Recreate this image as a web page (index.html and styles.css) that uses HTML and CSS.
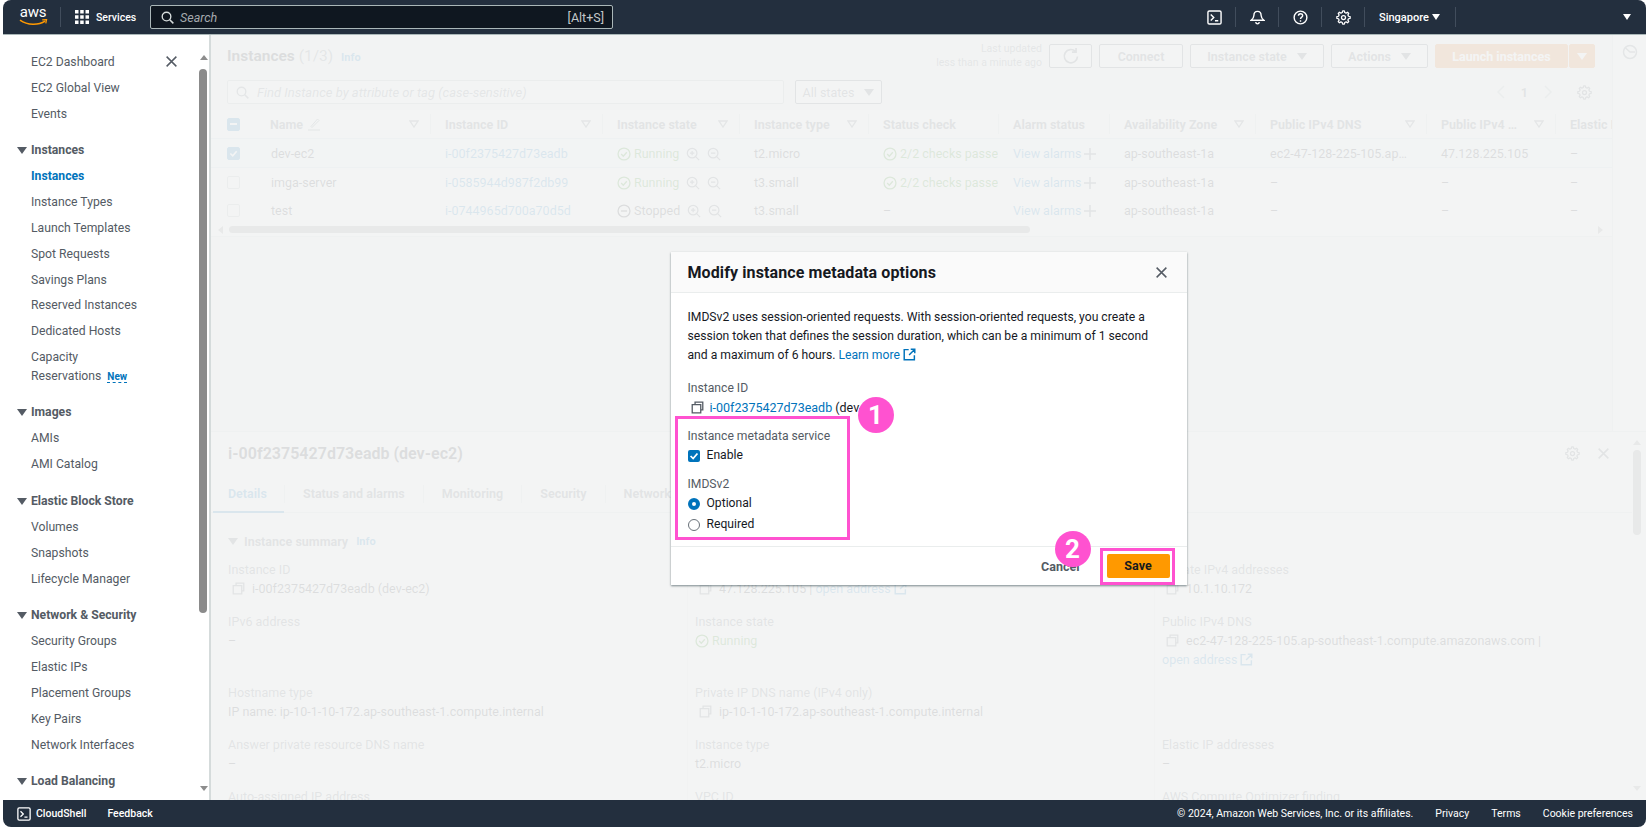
FILE: index.html
```html
<!DOCTYPE html>
<html lang="en">
<head>
    <meta charset="UTF-8">
    <title>Instances | EC2</title>
    <link rel="stylesheet" href="styles.css">
</head>
<body>
<svg class="defs">
    <symbol id="i-copy" viewBox="0 0 16 16"><path d="M5 4V1.500h9.500V11H12M1.500 4.500H12v10H1.500z" fill="none" stroke="currentColor" stroke-width="1.600"/></symbol>
    <symbol id="i-gear" viewBox="-1 0 18 18"><path d="M7 1h2l.5 2 1.600.7 1.800-1 1.400 1.400-1 1.800.7 1.600 2 .5v2l-2 .5-.7 1.600 1 1.800-1.400 1.400-1.800-1-1.600.7-.5 2H7l-.5-2-1.600-.7-1.800 1-1.400-1.400 1-1.800-.7-1.600-2-.5V8l2-.5.7-1.600-1-1.800 1.400-1.400 1.800 1 1.600-.7z" fill="none" stroke="currentColor" stroke-width="1.500" stroke-linejoin="round"/><circle cx="8" cy="9" r="2.400" fill="none" stroke="currentColor" stroke-width="1.500"/></symbol>
    <symbol id="i-search" viewBox="0 0 16 16"><circle cx="6.800" cy="6.800" r="5.300" fill="none" stroke="currentColor" stroke-width="1.700"/><path d="M10.800 10.800l4.400 4.400" stroke="currentColor" stroke-width="1.900"/></symbol>
    <symbol id="i-close" viewBox="0 0 16 16"><path d="M2 2l12 12M14 2L2 14" stroke="currentColor" stroke-width="1.800"/></symbol>
    <symbol id="i-external" viewBox="0 0 16 16"><path d="M7 2H1.500v12.500H14V9M9.500 1.500h5v5M14.500 1.500L7.500 8.500" fill="none" stroke="currentColor" stroke-width="1.800"/></symbol>
    <symbol id="i-check" viewBox="0 0 16 16"><circle cx="8" cy="8" r="6.800" fill="none" stroke="currentColor" stroke-width="1.500"/><path d="M4.800 8l2.400 2.500 4-4.500" fill="none" stroke="currentColor" stroke-width="1.500"/></symbol>
    <symbol id="i-stop" viewBox="0 0 16 16"><circle cx="8" cy="8" r="6.800" fill="none" stroke="currentColor" stroke-width="1.500"/><path d="M4.500 8h7" stroke="currentColor" stroke-width="1.500"/></symbol>
    <symbol id="i-zoomin" viewBox="0 0 16 16"><circle cx="7" cy="7" r="5.500" fill="none" stroke="currentColor" stroke-width="1.400"/><path d="M11 11l4 4M4.500 7h5M7 4.500v5" stroke="currentColor" stroke-width="1.400"/></symbol>
    <symbol id="i-zoomout" viewBox="0 0 16 16"><circle cx="7" cy="7" r="5.500" fill="none" stroke="currentColor" stroke-width="1.400"/><path d="M11 11l4 4M4.500 7h5" stroke="currentColor" stroke-width="1.400"/></symbol>
    <symbol id="i-plus" viewBox="0 0 14 14"><path d="M7 1v12M1 7h12" stroke="currentColor" stroke-width="1.500"/></symbol>
    <symbol id="i-shell" viewBox="0 0 16 16"><rect x="1" y="1" width="14" height="14" rx="1.500" fill="none" stroke="currentColor" stroke-width="1.500"/><path d="M4 4.800L7.200 8 4 11.200M8.500 11.500h3.500" fill="none" stroke="currentColor" stroke-width="1.500"/></symbol>
    <symbol id="i-sort" viewBox="0 0 10 8"><path d="M1 1h8L5 7z" fill="none" stroke="currentColor" stroke-width="1.300"/></symbol>
</svg>

<div class="app">
    <header class="topbar">
        <div class="logo">
            <span class="logo-text">aws</span>
            <svg class="logo-smile" viewBox="0 0 30 7"><path d="M1 1c8 5.500 19 5.500 26 1" fill="none" stroke="#f90" stroke-width="1.600"/><path d="M24 .8l4.500-.3-.8 4" fill="none" stroke="#f90" stroke-width="1.300"/></svg>
        </div>
        <span class="top-sep top-sep-logo"></span>
        <svg class="grid-icon" viewBox="0 0 14 14"><path fill="#fff" d="M0 0h3.500v3.500H0zM5.200 0h3.500v3.500H5.200zM10.500 0H14v3.500h-3.500zM0 5.200h3.500v3.500H0zM5.200 5.200h3.500v3.500H5.200zM10.500 5.200H14v3.500h-3.500zM0 10.500h3.500V14H0zM5.200 10.500h3.500V14H5.200zM10.500 10.500H14V14h-3.500z"/></svg>
        <span class="services">Services</span>
        <div class="top-search">
            <svg class="ic-13"><use href="#i-search"/></svg>
            <span class="top-search-text">Search</span>
            <span class="top-search-key">[Alt+S]</span>
        </div>
        <div class="top-right">
            <svg class="top-icon"><use href="#i-shell"/></svg>
            <span class="top-sep"></span>
            <svg class="top-icon" viewBox="0 0 16 16"><path d="M8 1.500c-2.500 0-3.800 1.800-3.800 4.200 0 2.500-1.200 3.800-3 5.300h13.600c-1.800-1.500-3-2.800-3-5.300 0-2.400-1.300-4.200-3.800-4.200zM6 13c.3 1.200 1 1.800 2 1.800s1.700-.6 2-1.800" fill="none" stroke="#fff" stroke-width="1.500"/></svg>
            <span class="top-sep"></span>
            <svg class="top-icon" viewBox="0 0 16 16"><circle cx="8" cy="8" r="6.800" fill="none" stroke="#fff" stroke-width="1.500"/><path d="M5.800 6.200c0-3 4.500-3 4.500-.2 0 1.700-2.300 1.600-2.300 3.600M8 10.800v1.700" fill="none" stroke="#fff" stroke-width="1.500"/></svg>
            <span class="top-sep"></span>
            <svg class="top-icon"><use href="#i-gear"/></svg>
            <span class="top-sep"></span>
            <span class="region">Singapore</span>
            <span class="caret caret-white"></span>
            <span class="top-sep top-sep-region"></span>
            <span class="caret caret-white caret-account"></span>
        </div>
    </header>

    <div class="middle">
        <nav class="sidebar">
            <svg class="side-close"><use href="#i-close"/></svg>
            <a class="side-link">EC2 Dashboard</a>
            <a class="side-link">EC2 Global View</a>
            <a class="side-link">Events</a>

            <div class="side-head">Instances</div>
            <a class="side-link is-active">Instances</a>
            <a class="side-link">Instance Types</a>
            <a class="side-link">Launch Templates</a>
            <a class="side-link">Spot Requests</a>
            <a class="side-link">Savings Plans</a>
            <a class="side-link">Reserved Instances</a>
            <a class="side-link">Dedicated Hosts</a>
            <a class="side-link side-link-two">Capacity<br>Reservations <span class="side-new">New</span></a>

            <div class="side-head">Images</div>
            <a class="side-link">AMIs</a>
            <a class="side-link">AMI Catalog</a>

            <div class="side-head">Elastic Block Store</div>
            <a class="side-link">Volumes</a>
            <a class="side-link">Snapshots</a>
            <a class="side-link">Lifecycle Manager</a>

            <div class="side-head">Network &amp; Security</div>
            <a class="side-link">Security Groups</a>
            <a class="side-link">Elastic IPs</a>
            <a class="side-link">Placement Groups</a>
            <a class="side-link">Key Pairs</a>
            <a class="side-link">Network Interfaces</a>

            <div class="side-head">Load Balancing</div>

            <div class="side-scroll">
                <span class="arrow-up"></span>
                <span class="side-thumb"></span>
                <span class="arrow-down"></span>
            </div>
        </nav>

        <main class="main">
            <div class="main-top">
                <section class="instances">
                    <div class="title-row">
                        <h1 class="page-title">Instances <span class="page-count">(1/3)</span> <a class="info">Info</a></h1>
                        <div class="updated">Last updated<br>less than a minute ago</div>
                        <button class="btn btn-icon"><svg class="ic-18" viewBox="0 0 16 16"><path d="M13.800 8.500a5.900 5.900 0 1 1-1.700-4.500M12.500 .8v3.700H8.800" fill="none" stroke="currentColor" stroke-width="1.500"/></svg></button>
                        <button class="btn btn-connect">Connect</button>
                        <button class="btn btn-state">Instance state <span class="caret"></span></button>
                        <button class="btn btn-actions">Actions <span class="caret"></span></button>
                        <button class="btn btn-launch">Launch instances</button>
                        <button class="btn btn-launch-more"><span class="caret"></span></button>
                    </div>
                    <div class="filter-row">
                        <div class="filter-box">
                            <svg class="ic-13"><use href="#i-search"/></svg>
                            <span>Find Instance by attribute or tag (case-sensitive)</span>
                        </div>
                        <button class="btn btn-states">All states <span class="caret"></span></button>
                        <div class="pager">
                            <svg class="pager-arrow" viewBox="0 0 10 16"><path d="M8 2L2 8l6 6" fill="none" stroke="currentColor" stroke-width="1.500"/></svg>
                            <b>1</b>
                            <svg class="pager-arrow" viewBox="0 0 10 16"><path d="M2 2l6 6-6 6" fill="none" stroke="currentColor" stroke-width="1.500"/></svg>
                            <svg class="pager-gear"><use href="#i-gear"/></svg>
                        </div>
                    </div>

                    <table class="grid">
                        <colgroup>
                            <col class="c-cb"><col class="c-name"><col class="c-id"><col class="c-state"><col class="c-type"><col class="c-check"><col class="c-alarm"><col class="c-az"><col class="c-dns"><col class="c-ip"><col class="c-eip">
                        </colgroup>
                        <thead>
                            <tr>
                                <th class="cell-cb"><span class="box box-mixed"></span></th>
                                <th><div class="th-in">Name <svg class="ic-pen" viewBox="0 0 14 14"><path d="M1 13h12M4 9.500L10.500 2l1.500 1.500L5 10.500z" fill="none" stroke="currentColor"/></svg><svg class="sort"><use href="#i-sort"/></svg></div></th>
                                <th class="has-sep"><div class="th-in">Instance ID <svg class="sort"><use href="#i-sort"/></svg></div></th>
                                <th class="has-sep"><div class="th-in">Instance state <svg class="sort"><use href="#i-sort"/></svg></div></th>
                                <th class="has-sep"><div class="th-in">Instance type <svg class="sort"><use href="#i-sort"/></svg></div></th>
                                <th class="has-sep"><div class="th-in">Status check</div></th>
                                <th class="has-sep"><div class="th-in">Alarm status</div></th>
                                <th class="has-sep"><div class="th-in">Availability Zone <svg class="sort"><use href="#i-sort"/></svg></div></th>
                                <th class="has-sep"><div class="th-in">Public IPv4 DNS <svg class="sort"><use href="#i-sort"/></svg></div></th>
                                <th class="has-sep"><div class="th-in">Public IPv4 … <svg class="sort"><use href="#i-sort"/></svg></div></th>
                                <th class="has-sep"><div class="th-in">Elastic IP</div></th>
                            </tr>
                        </thead>
                        <tbody>
                            <tr class="is-selected">
                                <td class="cell-cb"><span class="box box-checked"><svg viewBox="0 0 14 14"><path d="M3 7l3 3 5-6" fill="none" stroke="#fff" stroke-width="2"/></svg></span></td>
                                <td>dev-ec2</td>
                                <td><a class="link">i-00f2375427d73eadb</a></td>
                                <td><span class="state ok"><svg class="ic-15"><use href="#i-check"/></svg>Running</span><svg class="ic-zoom"><use href="#i-zoomin"/></svg><svg class="ic-zoom"><use href="#i-zoomout"/></svg></td>
                                <td>t2.micro</td>
                                <td class="clip"><span class="state ok"><svg class="ic-15"><use href="#i-check"/></svg>2/2 checks passed</span></td>
                                <td><a class="link">View alarms</a> <svg class="ic-plus"><use href="#i-plus"/></svg></td>
                                <td>ap-southeast-1a</td>
                                <td>ec2-47-128-225-105.ap…</td>
                                <td>47.128.225.105</td>
                                <td>–</td>
                            </tr>
                            <tr>
                                <td class="cell-cb"><span class="box"></span></td>
                                <td>imga-server</td>
                                <td><a class="link">i-0585944d987f2db99</a></td>
                                <td><span class="state ok"><svg class="ic-15"><use href="#i-check"/></svg>Running</span><svg class="ic-zoom"><use href="#i-zoomin"/></svg><svg class="ic-zoom"><use href="#i-zoomout"/></svg></td>
                                <td>t3.small</td>
                                <td class="clip"><span class="state ok"><svg class="ic-15"><use href="#i-check"/></svg>2/2 checks passed</span></td>
                                <td><a class="link">View alarms</a> <svg class="ic-plus"><use href="#i-plus"/></svg></td>
                                <td>ap-southeast-1a</td>
                                <td>–</td>
                                <td>–</td>
                                <td>–</td>
                            </tr>
                            <tr>
                                <td class="cell-cb"><span class="box"></span></td>
                                <td>test</td>
                                <td><a class="link">i-0744965d700a70d5d</a></td>
                                <td><span class="state"><svg class="ic-15"><use href="#i-stop"/></svg>Stopped</span><svg class="ic-zoom"><use href="#i-zoomin"/></svg><svg class="ic-zoom"><use href="#i-zoomout"/></svg></td>
                                <td>t3.small</td>
                                <td>–</td>
                                <td><a class="link">View alarms</a> <svg class="ic-plus"><use href="#i-plus"/></svg></td>
                                <td>ap-southeast-1a</td>
                                <td>–</td>
                                <td>–</td>
                                <td>–</td>
                            </tr>
                        </tbody>
                    </table>
                    <div class="h-scroll"><span class="h-thumb"></span></div>
                </section>
                <aside class="tools">
                    <svg class="tools-icon" viewBox="0 0 16 16"><circle cx="8" cy="8" r="6.500" fill="none" stroke="currentColor" stroke-width="1.500"/><path d="M3 3.500L8 8h5" fill="none" stroke="currentColor" stroke-width="1.500"/></svg>
                </aside>
            </div>

            <section class="split">
                <div class="split-head">
                    <h2 class="split-title">i-00f2375427d73eadb (dev-ec2)</h2>
                    <svg class="split-gear"><use href="#i-gear"/></svg>
                    <svg class="split-close"><use href="#i-close"/></svg>
                </div>
                <div class="tabs">
                    <span class="tab is-active">Details</span>
                    <span class="tab">Status and alarms</span>
                    <span class="tab">Monitoring</span>
                    <span class="tab">Security</span>
                    <span class="tab">Networking</span>
                    <span class="tab">Storage</span>
                    <span class="tab">Tags</span>
                </div>
                <div class="summary-head"><span class="caret"></span><b>Instance summary</b> <a class="info">Info</a></div>
                <div class="details">
                    <div class="field"><label>Instance ID</label><p><svg class="ic-copy"><use href="#i-copy"/></svg>i-00f2375427d73eadb (dev-ec2)</p></div>
                    <div class="field"><label>Public IPv4 address</label><p><svg class="ic-copy"><use href="#i-copy"/></svg>47.128.225.105 | <a class="link">open address</a> <svg class="ic-ext link"><use href="#i-external"/></svg></p></div>
                    <div class="field"><label>Private IPv4 addresses</label><p><svg class="ic-copy"><use href="#i-copy"/></svg>10.1.10.172</p></div>

                    <div class="field"><label>IPv6 address</label><p>–</p></div>
                    <div class="field"><label>Instance state</label><p class="ok"><svg class="ic-state"><use href="#i-check"/></svg>Running</p></div>
                    <div class="field"><label>Public IPv4 DNS</label><p><svg class="ic-copy"><use href="#i-copy"/></svg>ec2-47-128-225-105.ap-southeast-1.compute.amazonaws.com |</p><p><a class="link">open address</a> <svg class="ic-ext link"><use href="#i-external"/></svg></p></div>

                    <div class="field"><label>Hostname type</label><p>IP name: ip-10-1-10-172.ap-southeast-1.compute.internal</p></div>
                    <div class="field"><label>Private IP DNS name (IPv4 only)</label><p><svg class="ic-copy"><use href="#i-copy"/></svg>ip-10-1-10-172.ap-southeast-1.compute.internal</p></div>
                    <div class="field"></div>

                    <div class="field"><label>Answer private resource DNS name</label><p>–</p></div>
                    <div class="field"><label>Instance type</label><p>t2.micro</p></div>
                    <div class="field"><label>Elastic IP addresses</label><p>–</p></div>

                    <div class="field"><label>Auto-assigned IP address</label></div>
                    <div class="field"><label>VPC ID</label></div>
                    <div class="field"><label>AWS Compute Optimizer finding</label></div>
                </div>
                <div class="split-scroll"><span class="arrow-up"></span><span class="split-thumb"></span><span class="arrow-down"></span></div>
            </section>

            <div class="overlay">
                <div class="modal">
                    <div class="modal-head">
                        <h2>Modify instance metadata options</h2>
                        <svg class="modal-close"><use href="#i-close"/></svg>
                    </div>
                    <div class="modal-body">
                        <p class="modal-intro">IMDSv2 uses session-oriented requests. With session-oriented requests, you create a session token that defines the session duration, which can be a minimum of 1 second and a maximum of 6 hours. <a class="link-on">Learn more</a> <svg class="ic-ext link-on"><use href="#i-external"/></svg></p>
                        <div class="form-label">Instance ID</div>
                        <div class="form-id"><svg class="ic-copy"><use href="#i-copy"/></svg><a class="link-on">i-00f2375427d73eadb</a> <span class="form-id-name">(dev-ec2)</span></div>
                        <div class="form-label form-service">Instance metadata service</div>
                        <div class="option"><span class="check-on"><svg viewBox="0 0 14 14"><path d="M3 7l3 3 5-6" fill="none" stroke="#fff" stroke-width="2"/></svg></span>Enable</div>
                        <div class="form-label form-imds">IMDSv2</div>
                        <div class="option"><span class="radio radio-on"></span>Optional</div>
                        <div class="option option-last"><span class="radio"></span>Required</div>
                    </div>
                    <div class="modal-foot">
                        <span class="btn-cancel">Cancel</span>
                        <span class="btn-save">Save</span>
                    </div>
                    <span class="mark mark-form"></span>
                    <span class="mark mark-save"></span>
                    <span class="step step-one">1</span>
                    <span class="step step-two">2</span>
                </div>
            </div>
        </main>
    </div>

    <footer class="footer">
        <svg class="foot-icon"><use href="#i-shell"/></svg>
        <span class="foot-strong">CloudShell</span>
        <span class="foot-strong foot-feedback">Feedback</span>
        <span class="foot-copy">© 2024, Amazon Web Services, Inc. or its affiliates.</span>
        <span class="foot-link">Privacy</span>
        <span class="foot-link">Terms</span>
        <span class="foot-link">Cookie preferences</span>
    </footer>
</div>
</body>
</html>
```

FILE: styles.css
```css
html, body {
    height: 100%;
}
body {
    margin: 0;
    background: #fff;
    font-family: Roboto, "Noto Sans", Arial, sans-serif;
    font-size: 12.5px;
    color: #16191f;
    overflow: hidden;
}
.defs {
    display: none;
}
p, h1, h2 {
    margin: 0;
}
button {
    font-family: inherit;
}
.app {
    display: flex;
    flex-direction: column;
    height: 827px;
    margin: 0 4px 0 3px;
    border-radius: 8px;
    overflow: hidden;
}

/* top bar */
.topbar {
    display: flex;
    align-items: center;
    flex: none;
    height: 35px;
    background: #232f3e;
    color: #fff;
    border-bottom: 1px solid #aab7b8;
    box-sizing: border-box;
}
.logo {
    display: flex;
    flex-direction: column;
    align-items: center;
    width: 30px;
    margin-left: 15px;
    margin-top: -2px;
}
.logo-text {
    font-size: 15px;
    line-height: 13px;
    letter-spacing: -.2px;
}
.logo-smile {
    width: 29px;
    height: 7px;
    margin-top: 0;
}
.top-sep {
    width: 1px;
    height: 20px;
    background: #414d5c;
}
.top-sep-logo {
    margin: 0 14px 0 12px;
}
.grid-icon {
    width: 14px;
    height: 14px;
}
.services {
    margin-left: 7px;
    width: 54px;
    font-size: 10.5px;
    font-weight: 500;
}
.top-search {
    display: flex;
    align-items: center;
    width: 463px;
    height: 24px;
    box-sizing: border-box;
    padding: 0 8px 0 10px;
    background: #0f1720;
    border: 1px solid #aab7b8;
    border-radius: 2px;
    color: #d5dbdb;
}
.top-search-text {
    margin-left: 6px;
    font-style: italic;
    color: #a4a9ad;
}
.top-search-key {
    margin-left: auto;
    font-size: 12.5px;
    color: #c3c7c9;
}
.ic-13 {
    width: 13px;
    height: 13px;
    flex: none;
}
.top-right {
    display: flex;
    align-items: center;
    margin-left: auto;
    height: 100%;
}
.top-icon {
    width: 15px;
    height: 15px;
    margin: 0 13.5px;
    color: #fff;
}
.region {
    margin-left: 14px;
    font-size: 11px;
    font-weight: 500;
    width: 53px;
}
.caret {
    display: inline-block;
    width: 0;
    height: 0;
    border-left: 5px solid transparent;
    border-right: 5px solid transparent;
    border-top: 7px solid #545b64;
    vertical-align: 0;
}
.caret-white {
    border-left-width: 4px;
    border-right-width: 4px;
    border-top: 6px solid #fff;
}
.top-sep-region {
    margin-left: 15px;
}
.caret-account {
    margin-left: 167px;
    margin-right: 15px;
}

.middle {
    display: flex;
    flex: 1;
    min-height: 0;
}

/* side nav */
.sidebar {
    position: relative;
    flex: none;
    width: 208px;
    box-sizing: border-box;
    padding: 15px 0 0 28px;
    background: #fff;
    border-right: 2px solid #d5dbdb;
    overflow: hidden;
}
.side-close {
    position: absolute;
    left: 162px;
    top: 20px;
    width: 13px;
    height: 13px;
    color: #545b64;
}
.side-link {
    display: block;
    height: 25.8px;
    line-height: 25.8px;
    font-size: 12.2px;
    color: #545b64;
}
.side-link.is-active {
    color: #0073bb;
    font-weight: 700;
}
.side-link-two {
    height: 44.5px;
    line-height: 19px;
    padding-top: 3px;
    box-sizing: border-box;
}
.side-new {
    margin-left: 3px;
    font-size: 10px;
    font-weight: 700;
    color: #0073bb;
    border-bottom: 1px dashed #0073bb;
}
.side-head {
    position: relative;
    height: 26px;
    line-height: 24px;
    margin-top: 11px;
    font-size: 12.2px;
    font-weight: 700;
    color: #545b64;
}
.side-head::before {
    content: "";
    position: absolute;
    left: -14px;
    top: 9px;
    border-left: 5px solid transparent;
    border-right: 5px solid transparent;
    border-top: 7px solid #545b64;
}
.side-scroll {
    position: absolute;
    right: 0;
    top: 0;
    bottom: 0;
    width: 10px;
}
.arrow-up, .arrow-down {
    position: absolute;
    left: 1px;
    border-left: 4px solid transparent;
    border-right: 4px solid transparent;
}
.arrow-up {
    top: 20px;
    border-bottom: 5px solid #8d8d8d;
}
.arrow-down {
    bottom: 9px;
    border-top: 5px solid #8d8d8d;
}
.side-thumb {
    position: absolute;
    left: 0;
    top: 34px;
    width: 8px;
    height: 544px;
    border-radius: 4px;
    background: #8b8b8b;
}

/* main */
.main {
    position: relative;
    display: flex;
    flex-direction: column;
    flex: 1;
    min-width: 0;
    background: #f2f3f3;
    overflow: hidden;
}
.main-top {
    display: flex;
    flex: none;
    height: 396px;
}
.instances {
    flex: none;
    width: 1401px;
    box-sizing: border-box;
    padding-top: 9px;
}
.tools {
    flex: 1;
    background: #fff;
    border-left: 1px solid #d5dbdb;
    padding: 9px 0 0 9px;
}
.tools-icon {
    width: 16px;
    height: 16px;
    color: #687078;
}
.title-row {
    display: flex;
    align-items: center;
    height: 24px;
    padding-left: 16px;
}
.page-title {
    font-size: 15.5px;
    font-weight: 700;
    color: #16191f;
    margin-top: 0;
}
.page-count {
    font-weight: 400;
    color: #687078;
}
.info {
    font-size: 11px;
    font-weight: 700;
    color: #0073bb;
    margin-left: 4px;
}
.updated {
    margin-left: auto;
    margin-right: 7px;
    text-align: right;
    font-size: 10.5px;
    line-height: 14px;
    color: #687078;
}
.btn {
    display: inline-flex;
    align-items: center;
    justify-content: center;
    gap: 10px;
    height: 24px;
    padding: 0;
    margin-right: 7px;
    box-sizing: border-box;
    background: #fff;
    border: 1px solid #545b64;
    border-radius: 2px;
    color: #545b64;
    font-size: 12.5px;
    font-weight: 700;
}
.btn-icon {
    width: 43px;
}
.btn-connect {
    width: 84px;
}
.btn-state {
    width: 134px;
}
.btn-actions {
    width: 97px;
}
.btn-launch {
    width: 133px;
    background: #ec7211;
    border-color: #ec7211;
    color: #fff;
    margin-right: 1px;
}
.btn-launch-more {
    width: 26px;
    margin-right: 17px;
    background: #ec7211;
    border-color: #ec7211;
}
.btn-launch-more .caret {
    border-top-color: #fff;
}
.ic-18 {
    width: 18px;
    height: 18px;
}
.filter-row {
    display: flex;
    align-items: center;
    height: 24px;
    margin-top: 12px;
    padding-left: 16px;
}
.filter-box {
    display: flex;
    align-items: center;
    gap: 8px;
    width: 557px;
    height: 24px;
    box-sizing: border-box;
    padding-left: 8px;
    margin-right: 11px;
    background: #fff;
    border: 1px solid #aab7b8;
    border-radius: 2px;
    color: #687078;
    font-style: italic;
    font-size: 13px;
}
.btn-states {
    width: 87px;
    font-weight: 400;
    border-color: #545b64;
}
.pager {
    display: flex;
    align-items: center;
    margin-left: auto;
    color: #545b64;
    font-size: 12.5px;
}
.pager-arrow {
    width: 10px;
    height: 16px;
    color: #aab7b8;
}
.pager b {
    margin: 0 15px;
}
.pager-gear {
    width: 15px;
    height: 15px;
    margin: 0 20px 0 24px;
    color: #545b64;
}

/* instance table */
.grid {
    width: 1401px;
    margin-top: 6px;
    table-layout: fixed;
    border-collapse: collapse;
    font-size: 12.5px;
    color: #16191f;
    background: #fff;
}
.c-cb { width: 45px; }
.c-name { width: 174px; }
.c-id { width: 172px; }
.c-state { width: 137px; }
.c-type { width: 129px; }
.c-check { width: 130px; }
.c-alarm { width: 111px; }
.c-az { width: 146px; }
.c-dns { width: 171px; }
.c-ip { width: 129px; }
.c-eip { width: 57px; }
.grid th {
    height: 28px;
    padding: 0;
    text-align: left;
    font-weight: 700;
    color: #545b64;
    background: #fafafa;
    border-bottom: 1px solid #c6d9e8;
    white-space: nowrap;
    overflow: hidden;
}
.th-in {
    display: flex;
    align-items: center;
    gap: 4px;
    height: 20px;
    padding: 0 11px 0 14px;
}
.has-sep .th-in {
    border-left: 1px solid #d5dbdb;
}
.sort {
    width: 10px;
    height: 8px;
    margin-left: auto;
    color: #687078;
    flex: none;
}
.ic-pen {
    width: 14px;
    height: 14px;
    color: #687078;
}
.grid td {
    height: 28px;
    padding: 0 0 0 15px;
    white-space: nowrap;
    overflow: hidden;
}
.grid .is-selected td {
    background: #f1faff;
    border-bottom: 1px solid #c6d9e8;
}
.grid .cell-cb {
    padding: 0 0 0 16px;
}
.clip {
    text-overflow: clip;
}
.box {
    display: block;
    width: 13px;
    height: 13px;
    box-sizing: border-box;
    background: #fff;
    border: 1px solid #aab7b8;
    border-radius: 2px;
}
.box-mixed, .box-checked {
    background: #0073bb;
    border-color: #0073bb;
}
.box-mixed {
    position: relative;
}
.box-mixed::after {
    content: "";
    position: absolute;
    left: 2px;
    right: 2px;
    top: 4px;
    height: 2px;
    background: #fff;
}
.box-checked svg {
    display: block;
}
.link {
    color: #0073bb;
}
.ok {
    color: #1d8102;
}
.state {
    display: inline-flex;
    align-items: center;
    gap: 3px;
    vertical-align: middle;
}
.ic-15 {
    width: 14px;
    height: 14px;
    flex: none;
}
.ic-zoom {
    width: 14px;
    height: 14px;
    margin-left: 7px;
    color: #545b64;
    vertical-align: middle;
}
.ic-plus {
    width: 14px;
    height: 14px;
    margin-left: -2px;
    color: #545b64;
    vertical-align: -3px;
}
.h-scroll {
    position: relative;
    height: 13px;
    padding-top: 2px;
    box-sizing: border-box;
    border-bottom: 1px solid #d5dbdb;
    padding-left: 18px;
    background: #fff;
}
.h-scroll::before, .h-scroll::after {
    content: "";
    position: absolute;
    top: 2px;
    border-top: 4px solid transparent;
    border-bottom: 4px solid transparent;
}
.h-scroll::before {
    left: 7px;
    border-right: 5px solid #8d8d8d;
}
.h-scroll::after {
    right: 9px;
    border-left: 5px solid #8d8d8d;
}
.h-thumb {
    display: block;
    width: 801px;
    height: 7px;
    border-radius: 4px;
    background: #8b8b8b;
}

/* split panel */
.split {
    position: relative;
    flex: 1;
    min-height: 0;
    background: #fff;
    border-top: 1px solid #d5dbdb;
    overflow: hidden;
}
.split-head {
    display: flex;
    align-items: center;
    height: 44px;
    box-sizing: border-box;
    padding: 0 0 2px 17px;
}
.split-title {
    font-size: 16px;
    font-weight: 700;
    color: #16191f;
}
.split-gear {
    width: 15px;
    height: 15px;
    margin-left: auto;
    color: #545b64;
}
.split-close {
    width: 13px;
    height: 13px;
    margin: 0 36px 0 17px;
    color: #545b64;
}
.tabs {
    display: flex;
    align-items: center;
    height: 37px;
    margin-right: 14px;
    box-sizing: border-box;
    padding-left: 0;
    border-bottom: 1px solid #d5dbdb;
    white-space: nowrap;
}
.tab {
    padding: 0 18px;
    line-height: 18px;
    border-left: 1px solid #d5dbdb;
    font-weight: 700;
    font-size: 12.5px;
    color: #545b64;
}
.tab.is-active {
    position: relative;
    border-left: 0;
    padding: 0 17px;
    color: #0073bb;
    width: 39px;
}
.tab.is-active::after {
    content: "";
    position: absolute;
    left: 2px;
    right: 0;
    bottom: -10px;
    height: 2px;
    background: #0073bb;
}
.summary-head {
    display: flex;
    align-items: center;
    gap: 6px;
    height: 20px;
    margin-top: 18px;
    padding-left: 17px;
    color: #545b64;
}
.summary-head .info {
    margin-left: 2px;
}
.details {
    display: grid;
    grid-template-columns: 459px 467px 1fr;
    margin-top: 9px;
    padding-left: 17px;
}
.field {
    padding-bottom: 14px;
    line-height: 19px;
    min-height: 38px;
}
.field:nth-child(3n + 2), .field:nth-child(3n + 3) {
    border-left: 1px solid #e3e6e6;
    padding-left: 7px;
}
.field label {
    display: block;
    color: #545b64;
}
.field p {
    color: #16191f;
}
.field p.ok {
    color: #1d8102;
}
.ic-copy {
    width: 13px;
    height: 13px;
    margin: 0 7px 0 4px;
    color: #545b64;
    vertical-align: -2px;
}
.ic-state {
    width: 14px;
    height: 14px;
    margin-right: 3px;
    vertical-align: -3px;
}
.ic-ext {
    width: 13px;
    height: 13px;
    vertical-align: -2px;
}
.split-scroll {
    position: absolute;
    right: 5px;
    top: 0;
    bottom: 0;
    width: 8px;
}
.split-scroll .arrow-up {
    left: 0;
    top: 8px;
}
.split-scroll .arrow-down {
    left: 0;
}
.split-thumb {
    display: block;
    margin-top: 18px;
    height: 85px;
    border-radius: 4px;
    background: #8b8b8b;
}

/* modal */
.overlay {
    position: absolute;
    inset: 0;
    display: flex;
    justify-content: center;
    align-items: flex-start;
    padding-top: 217px;
    background: rgba(242, 243, 243, .9);
}
.modal {
    position: relative;
    width: 516px;
    height: 333px;
    display: flex;
    flex-direction: column;
    background: #fff;
    box-shadow: 0 1px 2px rgba(0, 28, 36, .5);
}
.modal-head {
    display: flex;
    align-items: center;
    justify-content: space-between;
    flex: none;
    height: 41px;
    padding: 0 19px 0 17px;
    box-sizing: border-box;
    background: #fafafa;
    border-bottom: 1px solid #eaeded;
}
.modal-head h2 {
    font-size: 16px;
    letter-spacing: .1px;
    font-weight: 700;
    color: #16191f;
}
.modal-close {
    width: 13px;
    height: 13px;
    color: #545b64;
}
.modal-body {
    flex: 1;
    padding: 15px 17px 0;
    line-height: 19px;
    font-size: 12.15px;
    color: #16191f;
}
.modal-intro {
    height: 57px;
}
.link-on {
    color: #0073bb;
}
.form-label {
    margin-top: 14px;
    color: #545b64;
}
.form-service {
    margin-top: 10px;
}
.form-imds {
    margin-top: 10px;
}
.form-id {
    white-space: nowrap;
    overflow: hidden;
    font-size: 12.5px;
}
.form-id .ic-copy {
    margin-left: 3px;
    margin-right: 6px;
}
.option {
    display: flex;
    align-items: center;
    gap: 7px;
    height: 19px;
}
.option-last {
    margin-top: 2px;
}
.check-on {
    display: block;
    width: 12px;
    height: 12px;
    border-radius: 2px;
    background: #0073bb;
}
.check-on svg {
    display: block;
}
.radio {
    display: block;
    box-sizing: border-box;
    width: 12px;
    height: 12px;
    border-radius: 50%;
    border: 1px solid #687078;
}
.radio-on {
    border: 4px solid #0073bb;
}
.modal-foot {
    display: flex;
    align-items: center;
    justify-content: flex-end;
    flex: none;
    height: 39px;
    box-sizing: border-box;
    padding: 0 17px 0 0;
    border-top: 1px solid #eaeded;
}
.btn-cancel {
    margin-right: 27px;
    font-weight: 700;
    color: #545b64;
}
.btn-save {
    width: 63px;
    height: 24px;
    line-height: 24px;
    text-align: center;
    font-weight: 700;
    background: #ff9900;
    border-radius: 2px;
    color: #16191f;
}

/* annotations on top of the screenshot */
.mark {
    position: absolute;
    box-sizing: border-box;
    border: 3px solid #ff52d0;
}
.mark-form {
    left: 4px;
    top: 164px;
    width: 175px;
    height: 124px;
}
.mark-save {
    left: 429px;
    top: 296px;
    width: 75px;
    height: 37px;
}
.step {
    position: absolute;
    width: 36px;
    height: 36px;
    line-height: 36px;
    border-radius: 50%;
    text-align: center;
    font-size: 26px;
    font-weight: 700;
    color: #fff;
    background: #ff52d0;
}
.step-one {
    left: 187px;
    top: 145px;
}
.step-two {
    left: 384px;
    top: 279px;
}

/* footer */
.footer {
    display: flex;
    align-items: center;
    flex: none;
    height: 27px;
    background: #232f3e;
    color: #fff;
    font-size: 10.5px;
}
.foot-icon {
    width: 14px;
    height: 14px;
    margin: 0 5px 0 14px;
}
.foot-feedback {
    margin-left: 21px;
}
.foot-strong {
    font-weight: 500;
}
.foot-copy {
    margin-left: auto;
}
.foot-link {
    margin-left: 22px;
}
.foot-link:first-of-type {
    margin-left: 26px;
}
.foot-link:last-child {
    margin-right: 13px;
}
```
